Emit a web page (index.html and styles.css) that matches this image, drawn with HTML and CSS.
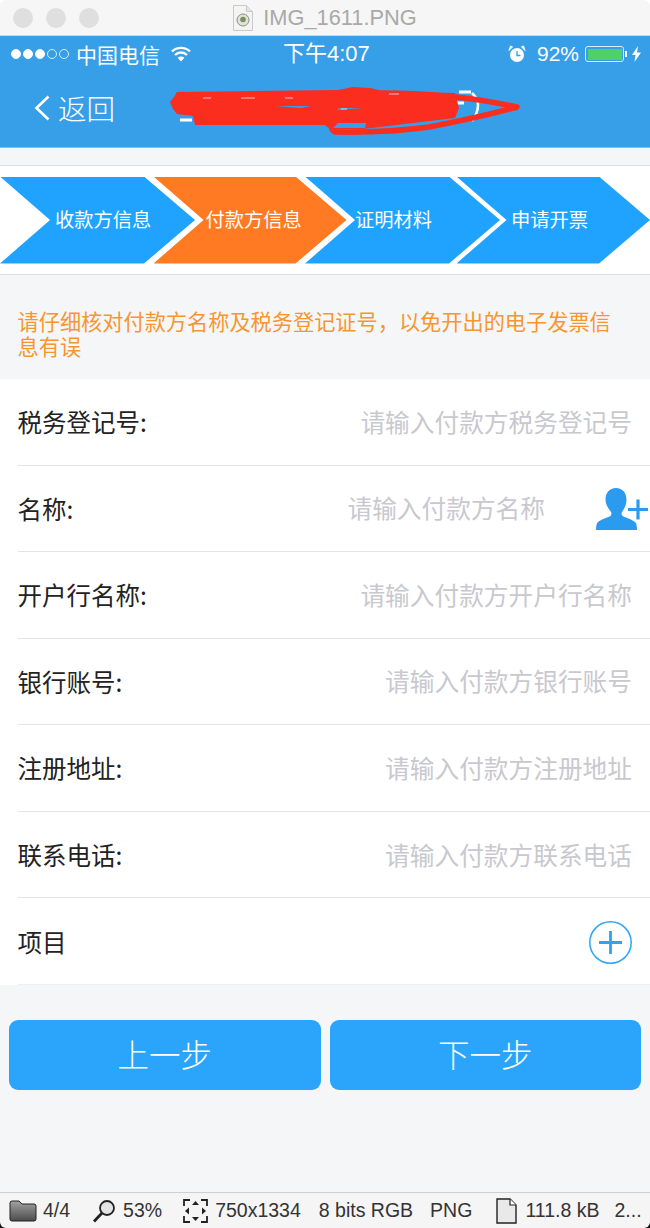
FILE: index.html
```html
<!DOCTYPE html>
<html lang="zh-CN">
<head>
<meta charset="utf-8">
<title>IMG_1611.PNG</title>
<link rel="stylesheet" href="styles.css">
</head>
<body>
<div class="window">
  <header class="titlebar">
    <div class="lights"><i></i><i></i><i></i></div>
    <div class="doc-title">
      <svg class="doc-icon" width="20" height="26" viewBox="0 0 20 26"><path d="M.5.5h13l6 6v19H.5z" fill="#f4f4f2" stroke="#c9c9c9"/><path d="M13.500.5v6h6" fill="#e4e4e4" stroke="#c9c9c9"/><circle cx="10" cy="15" r="6" fill="#dfe3d8" stroke="#8b8f85"/><circle cx="10" cy="14.500" r="2.800" fill="#7f8f5c"/></svg>
      <span>IMG_1611.PNG</span>
    </div>
  </header>

  <div class="phone">
    <section class="appbar">
      <div class="status">
        <div class="status-left">
          <span class="signal"><i class="on"></i><i class="on"></i><i class="on"></i><i></i><i></i></span>
          <span class="carrier">中国电信</span>
          <svg class="wifi" width="20" height="16" viewBox="0 0 20 16"><path d="M1 5.500a13 13 0 0 1 18 0M4 9a8.600 8.600 0 0 1 12 0" fill="none" stroke="#fff" stroke-width="2.400"/><path d="M10 15.500l-3.400-3.700a4.800 4.800 0 0 1 6.800 0z" fill="#fff"/></svg>
        </div>
        <div class="clock">下午4:07</div>
        <div class="status-right">
          <svg class="alarm" width="18" height="18" viewBox="0 0 18 18"><circle cx="9" cy="10" r="7" fill="#fff"/><path d="M9 6v4.500h3.500" fill="none" stroke="#369fe8" stroke-width="1.300"/><path d="M1 5.500 4.500 1.800 2.500 1zM17 5.500 13.500 1.800 15.500 1z" fill="#fff" stroke="#fff"/></svg>
          <span class="percent">92%</span>
          <span class="battery"><b></b></span>
          <span class="nub"></span>
          <svg class="bolt" width="9" height="16" viewBox="0 0 9 16"><path d="M6 0 0 9h3.500L2.500 16 9 6.500H5z" fill="#fff"/></svg>
        </div>
      </div>
      <nav class="navbar">
        <svg class="back-icon" width="16" height="26" viewBox="0 0 16 26"><path d="M14.500 1.500 2.500 13l12 11.500" fill="none" stroke="#fff" stroke-width="2.600"/></svg>
        <span class="back-text">返回</span>
      </nav>
      <svg class="scribble" width="360" height="56" viewBox="0 0 360 56">
        <path d="M14 14h14M15 31h14M17 40h12" stroke="#fff" stroke-width="3" fill="none"/>
        <path d="M309 13q12 11 0 28" stroke="#fff" stroke-width="2.500" fill="none"/>
        <path d="M292 23h9M296 12h12" stroke="#fff" stroke-width="3" fill="none"/>
        <path d="M14 12 175 10 190 7 207 8 225 12 292 13 296 28 292 38 250 43 200 49 168 50 162 45 32 45 30 36 14 34 10 29 7 22 11 17z" fill="#fb2d1e"/>
        <path d="M218 13q72 0 136 14 -36 10 -88 20 -44 6 -94 5 -8 -5 3 -11" fill="none" stroke="#fb2d1e" stroke-width="5.500" stroke-linejoin="round"/>
        <path d="M175 43h28l-1 5h-32zM112 26h36l-10 2zM176 28h24l-26 2z" fill="#369fe8"/>
        <path d="M40 18h8M78 18h14M122 18h8M226 14h10M178 29h6" stroke="#fff" stroke-width="1.200" opacity=".7"/>
      </svg>
    </section>

    <div class="spacer"></div>

    <section class="steps">
      <div class="step first">收款方信息</div>
      <div class="step active">付款方信息</div>
      <div class="step third">证明材料</div>
      <div class="step fourth">申请开票</div>
    </section>

    <p class="notice">请仔细核对付款方名称及税务登记证号，以免开出的电子发票信息有误</p>

    <section class="form">
      <div class="row"><span class="label">税务登记号:</span><span class="hint">请输入付款方税务登记号</span></div>
      <div class="row with-icon"><span class="label">名称:</span><span class="hint">请输入付款方名称</span>
        <svg class="person" width="54" height="42" viewBox="0 0 54 42"><path d="M20 0c6.500 0 10.500 5 10.500 11.500 0 5-2 9-4.500 12.500-.8 1.200-.5 3.500 1 4.300 3.500 1.800 10 3.600 12.500 6.200 1 1.200 1.500 4.500 1.500 7.500H0c0-3 .5-6.300 1.500-7.500 2.500-2.600 9-4.400 12.500-6.200 1.500-.8 1.800-3.100 1-4.300C12.500 20.500 9.500 16.500 9.500 11.500 9.500 5 13.500 0 20 0z" fill="#2b9bf0"/><path d="M32 21.500h20M42 11.500v20" stroke="#2b9bf0" stroke-width="3.200" fill="none"/></svg>
      </div>
      <div class="row"><span class="label">开户行名称:</span><span class="hint">请输入付款方开户行名称</span></div>
      <div class="row"><span class="label">银行账号:</span><span class="hint">请输入付款方银行账号</span></div>
      <div class="row"><span class="label">注册地址:</span><span class="hint">请输入付款方注册地址</span></div>
      <div class="row"><span class="label">联系电话:</span><span class="hint">请输入付款方联系电话</span></div>
      <div class="row last-row"><span class="label">项目</span>
        <svg class="add" width="43" height="43" viewBox="0 0 43 43"><circle cx="21.500" cy="21.500" r="20.700" fill="none" stroke="#2ba5f0" stroke-width="1.500"/><path d="M10 21.500h23M21.500 10v23" stroke="#2ba5f0" stroke-width="2.800"/></svg>
      </div>
    </section>

    <div class="actions">
      <button class="btn">上一步</button>
      <button class="btn">下一步</button>
    </div>
  </div>

  <footer class="infobar">
    <svg class="ic-folder" width="28" height="22" viewBox="0 0 28 22"><defs><linearGradient id="fg" x1="0" y1="0" x2="0" y2="1"><stop offset="0" stop-color="#a3a3a3"/><stop offset="1" stop-color="#4b4b4b"/></linearGradient></defs><path d="M1 5V3q0-2 2-2h7l3 3h12q2 0 2 2v13q0 2-2 2H3q-2 0-2-2z" fill="url(#fg)" stroke="#222"/></svg>
    <span class="t-count">4/4</span>
    <svg class="ic-zoom" width="24" height="24" viewBox="0 0 24 24"><circle cx="15" cy="9" r="7" fill="#e4e4e4" stroke="#222" stroke-width="1.800"/><path d="M10 14 2 22.500" stroke="#222" stroke-width="2.800"/></svg>
    <span class="t-zoom">53%</span>
    <svg class="ic-size" width="25" height="24" viewBox="0 0 25 24"><path d="M1 7V1h6M18 1h6v6M24 17v6h-6M7 23H1v-6" fill="none" stroke="#222" stroke-width="1.800"/><path d="M12.500 2 9 6h7zM12.500 22 9 18h7zM2 12l4-3.500v7zM23 12l-4-3.500v7z" fill="#222"/></svg>
    <span class="t-dim">750x1334</span>
    <span class="t-depth">8 bits RGB</span>
    <span class="t-type">PNG</span>
    <svg class="ic-doc" width="21" height="26" viewBox="0 0 21 26"><path d="M1 1h13l6 6v18H1z" fill="#e9e9e9" stroke="#222" stroke-width="1.400"/><path d="M14 1v6h6" fill="#fff" stroke="#222" stroke-width="1.200"/></svg>
    <span class="t-file">111.8 kB</span>
    <span class="t-more">2...</span>
  </footer>
</div>
</body>
</html>
```

FILE: styles.css
```css
* { box-sizing: border-box; }
html, body { margin: 0; padding: 0; }
body {
  width: 650px;
  height: 1228px;
  overflow: hidden;
  background: #fff;
  font-family: "Noto Sans CJK SC", "Noto Sans", sans-serif;
}
.window {
  position: relative;
  width: 650px;
  height: 1228px;
  display: flex;
  flex-direction: column;
  background: #111;
  overflow: hidden;
}

/* Title bar */
.titlebar {
  flex: 0 0 36px;
  position: relative;
  display: flex;
  align-items: center;
  justify-content: center;
  background: #f6f6f6;
  border-bottom: 1px solid #d6d6d6;
  border-radius: 6px 6px 0 0;
  box-shadow: 0 -6px 0 6px #fff;
}
.lights {
  position: absolute;
  left: 13px;
  top: 8px;
  display: flex;
  gap: 13px;
}
.lights i {
  width: 20px;
  height: 20px;
  border-radius: 50%;
  background: #dfdfdf;
}
.doc-title {
  display: flex;
  align-items: center;
  gap: 10px;
  font-family: "Liberation Sans", Arial, sans-serif;
  font-size: 21.800px;
  color: #a9a9a9;
}

/* Phone */
.phone {
  flex: 1;
  display: flex;
  flex-direction: column;
  background: #f5f6f8;
}
.appbar {
  position: relative;
  height: 112px;
  background: #369fe8;
  color: #fff;
  border-bottom: 1px solid #7fc0ee;
}
.status {
  height: 36px;
  padding: 0 9px 0 11px;
  display: flex;
  justify-content: space-between;
  align-items: center;
  position: relative;
}
.status-left, .status-right { display: flex; align-items: center; }
.signal { display: flex; gap: 2px; }
.signal i {
  width: 10px;
  height: 10px;
  border-radius: 50%;
  border: 1px solid #d8ecfb;
}
.signal i.on { background: #fff; border-color: #fff; }
.carrier { margin-left: 7px; font-size: 21px; line-height: 36px; }
.wifi { margin-left: 11px; }
.clock {
  position: absolute;
  left: 283px;
  top: 0;
  font-size: 22px;
  line-height: 36px;
  font-family: "Liberation Sans", "Noto Sans CJK SC", sans-serif;
}
.percent {
  margin-left: 11px;
  font-family: "Liberation Sans", Arial, sans-serif;
  font-size: 21px;
}
.battery {
  margin-left: 6px;
  width: 39px;
  height: 16px;
  padding: 1.500px;
  border: 1px solid #d8ecfb;
  border-radius: 3px;
  display: block;
}
.battery b {
  display: block;
  width: 100%;
  height: 100%;
  background: #4fd264;
}
.nub {
  width: 2px;
  height: 6px;
  margin-left: 1px;
  background: #fff;
}
.bolt { margin-left: 5px; }
.navbar {
  height: 75px;
  display: flex;
  align-items: center;
  padding: 0 0 4px 34px;
}
.back-text { margin-left: 8px; font-size: 28.500px; font-weight: 300; }
.scribble {
  position: absolute;
  left: 163px;
  top: 44px;
}

.spacer { flex: 0 0 17px; }

/* Steps */
.steps {
  flex: 0 0 110px;
  display: flex;
  align-items: center;
  background: #fff;
  border-top: 1px solid #dcdcdc;
  border-bottom: 1px solid #dcdcdc;
}
.step {
  height: 87px;
  padding-bottom: 2px;
  display: flex;
  align-items: center;
  font-size: 19.300px;
  color: #fff;
  background: #20a3ff;
  clip-path: polygon(0 0, calc(100% - 51px) 0, 100% 50%, calc(100% - 51px) 100%, 0 100%, 50px 50%);
}
.step.first { flex: 0 0 195px; padding-left: 55px; }
.step.active { flex: 0 0 193px; margin-left: -41.500px; padding-left: 52px; background: #ff7a22; }
.step.third { flex: 0 0 195px; margin-left: -41.500px; padding-left: 50px; }
.step.fourth { flex: 0 0 193.500px; margin-left: -43.500px; padding-left: 54.500px; }

/* Notice */
.notice {
  flex: 0 0 104px;
  margin: 0;
  padding: 34px 24px 0 17.500px;
  font-size: 21.200px;
  line-height: 24.500px;
  color: #f5962e;
}

/* Form */
.form { background: #fff; }
.row {
  height: 86.550px;
  margin-left: 18px;
  padding-right: 18px;
  display: flex;
  align-items: center;
  justify-content: space-between;
  border-bottom: 1px solid #e4e4e6;
  font-size: 24.500px;
}
.label { color: #222; margin-left: -0.500px; }
.hint { color: #c8c8ce; font-size: 24.700px; margin-bottom: 2px; }
.row.with-icon { padding-right: 0; }
.row.with-icon .hint { margin-left: auto; margin-right: 51px; }
.person { flex: none; margin-top: 2px; }
.add { margin-top: 2px; }
.last-row { border-bottom-color: #eef0f2; }

/* Actions */
.actions {
  display: flex;
  gap: 9px;
  padding: 35px 9px 0;
}
.btn {
  flex: 1;
  height: 70px;
  padding: 0 0 4px;
  border: 0;
  border-radius: 9px;
  background: #2ba5fb;
  color: #fff;
  font-family: inherit;
  font-size: 31.500px;
  font-weight: 300;
}

/* Info bar */
.infobar {
  flex: 0 0 36px;
  display: flex;
  align-items: center;
  padding-left: 9px;
  background: #f5f5f5;
  border-top: 1px solid #cfcfcf;
  border-radius: 0 0 6px 6px;
  font-family: "Liberation Sans", Arial, sans-serif;
  font-size: 19.500px;
  color: #333;
  white-space: nowrap;
}
.t-count { margin-left: 6px; }
.ic-zoom { margin-left: 22px; }
.t-zoom { margin-left: 7px; }
.ic-size { margin-left: 21px; }
.t-dim { margin-left: 7px; }
.t-depth { margin-left: 18px; }
.t-type { margin-left: 17px; }
.ic-doc { margin-left: 24px; }
.t-file { margin-left: 8px; }
.t-more { margin-left: 15px; }
```
